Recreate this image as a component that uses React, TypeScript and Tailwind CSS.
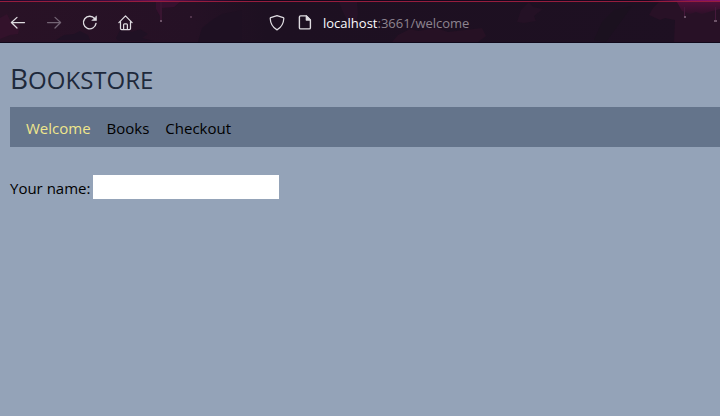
import { useState } from "react";
import type { ReactNode } from "react";

function ThemeArt() {
  return (
    <svg
      className="absolute inset-0 h-full w-full"
      viewBox="0 0 720 43"
      preserveAspectRatio="none"
      aria-hidden="true"
    >
      <defs>
        <linearGradient id="strip">
          <stop offset="0" stopColor="#1d0a2c" />
          <stop offset="0.15" stopColor="#3a0d40" />
          <stop offset="0.22" stopColor="#6a1050" />
          <stop offset="0.3" stopColor="#2a0b30" />
          <stop offset="0.35" stopColor="#14081c" />
          <stop offset="0.9" stopColor="#18081f" />
          <stop offset="0.96" stopColor="#7a1060" />
          <stop offset="1" stopColor="#8a1268" />
        </linearGradient>
        <linearGradient id="base">
          <stop offset="0" stopColor="#291226" />
          <stop offset="0.27" stopColor="#251125" />
          <stop offset="0.37" stopColor="#1d1021" />
          <stop offset="1" stopColor="#1e1022" />
        </linearGradient>
        <linearGradient id="glow" x1="0" y1="0" x2="0" y2="1">
          <stop offset="0" stopColor="#4e1039" />
          <stop offset="1" stopColor="#2e1029" />
        </linearGradient>
      </defs>
      <rect width="720" height="43" fill="url(#base)" />
      <path d="M0 18l7-4 4 8 9 3-2 9-8 1-10 4z" fill="#33122b" />
      <path d="M56 40l8-5 10-1 6-3 8 4 2 5z" fill="#1f1124" />
      <path d="M116 38l4-8 12 2 8-3 8 5-6 4 12 3h-36z" fill="#201124" />
      <path d="M198 42l4-14 10-8 10-6 20-4v32z" fill="#1e1022" />
      <path d="M156 2h24l-6 5-12 1-2 8-4-7z" fill="#35112e" />
      <path d="M160 2h2v19h-2z" fill="#391531" />
      <path d="M339 2h18l1 12-3 12-7-4-6-12z" fill="#251126" />
      <path d="M392 42l6-7 12-6 8 2 18-3 12 4 34-4 4 8-8 6z" fill="#261124" />
      <path d="M517 22l4-12 8-8 4 5 10 2-9 7 2 5-12 2z" fill="#241125" />
      <path d="M594 40l8-18 12-12 18-4-10 14-16 22z" fill="#1b111f" />
      <path d="M649 15l4-7 6-6h61v40h-46l1-22-10-2-5 2z" fill="#281126" />
      <path d="M677 2h43v7l-8 2-10 3-6-2-6 2-8-3z" fill="url(#glow)" />
      <path d="M684 7h1v10h-1zM715 7h1v14h-1z" fill="#45193b" />
      <path d="M684 16h2v2h-2zM714 20h3v2h-3zM160 20h2v2h-2z" fill="#6d5469" />
      <path d="M190 16h2v2h-2z" fill="#50334b" />
      <rect width="720" height="1" fill="url(#strip)" />
      <rect y="1" width="720" height="1" fill="#961d3d" />
      <rect y="42" width="720" height="1" fill="#10081a" />
    </svg>
  );
}

function Icon({ children }: { children: ReactNode }) {
  return (
    <svg
      width="16"
      height="16"
      viewBox="0 0 16 16"
      fill="none"
      stroke="currentColor"
      strokeWidth="1.25"
      strokeLinecap="round"
      strokeLinejoin="round"
      aria-hidden="true"
    >
      {children}
    </svg>
  );
}

function BrowserBar() {
  return (
    <header className="relative h-[43px] bg-[#1e1022] text-[#dedbe0]">
      <ThemeArt />
      <div className="relative flex h-full items-center pt-[3px] pl-[10px]">
        <div className="flex w-[259px] shrink-0 gap-5">
          <button type="button" aria-label="Back">
            <Icon>
              <path d="M14.5 7.5H1.6M7 2.4 1.4 7.5 7 13" />
            </Icon>
          </button>
          <button type="button" aria-label="Forward" disabled className="text-[#736474]">
            <Icon>
              <path d="M1.5 7.5h12.9M9 2.4 14.6 7.5 9 13" />
            </Icon>
          </button>
          <button type="button" aria-label="Reload">
            <Icon>
              <path d="M12.7 3.6A6.3 6.3 0 1 0 14 8.4" strokeWidth="1.4" />
              <path d="M14.5 1.2v4.3h-4.3z" fill="currentColor" strokeWidth="0.6" />
            </Icon>
          </button>
          <button type="button" aria-label="Home">
            <Icon>
              <path d="M.9 7.6 7.5 .9 14.1 7.6M2.5 6.6v6.8q0 1.1 1.1 1.1h7.8q1.1 0 1.1-1.1V6.6" />
              <path d="M5.6 14.2V9.8q0-1 1-1h1.8q1 0 1 1v4.4" />
            </Icon>
          </button>
        </div>
        <div className="flex items-center gap-3">
          <button type="button" aria-label="Tracking protection">
            <Icon>
              <path d="M8 .6 14.3 2.7q.5.2.5.8C14.6 8.4 12.8 12.1 8 14.9 3.2 12.1 1.4 8.4 1.2 3.5q0-.6.5-.8z" />
            </Icon>
          </button>
          <button type="button" aria-label="Site information">
            <Icon>
              <path d="M3.6.9h5.8l4 4v7.8q0 1.2-1.2 1.2H3.6q-1.2 0-1.2-1.2V2.1Q2.4.9 3.6.9z" strokeWidth="1.4" />
              <path d="M9.3 1v4h4z" fill="currentColor" />
            </Icon>
          </button>
          <p className="-ml-0.5 font-['Open_Sans','Noto_Sans',sans-serif] text-[13px] leading-5 text-[#8d848f]">
            <span className="text-[#fbfbfe]">localhost</span>:3661/welcome
          </p>
        </div>
      </div>
    </header>
  );
}

export default function App() {
  const [name, setName] = useState("");
  return (
    <div className="flex min-h-screen flex-col bg-[#94a3b8] font-['Open_Sans','Noto_Sans',sans-serif] text-[15px] leading-6 text-black">
      <BrowserBar />
      <main className="pt-4 pl-[10px]">
        <h1 className="h-10 text-[24px] leading-[38px] text-[#1e293b] uppercase first-letter:text-[28px]">
          Bookstore
        </h1>
        <nav className="mt-2 flex gap-4 bg-[#64748b] px-4 pt-[9px] pb-[7px]">
          <a href="#welcome" aria-current="page" className="text-[#f0e68c]">
            Welcome
          </a>
          <a href="#books">Books</a>
          <a href="#checkout">Checkout</a>
        </nav>
        <form className="mt-7 flex items-start gap-[3px]">
          <label htmlFor="name" className="pt-px">
            Your name:
          </label>
          <input
            id="name"
            type="text"
            value={name}
            onChange={(event) => setName(event.target.value)}
            className="h-6 w-[186px] bg-white outline-none"
          />
        </form>
      </main>
    </div>
  );
}
